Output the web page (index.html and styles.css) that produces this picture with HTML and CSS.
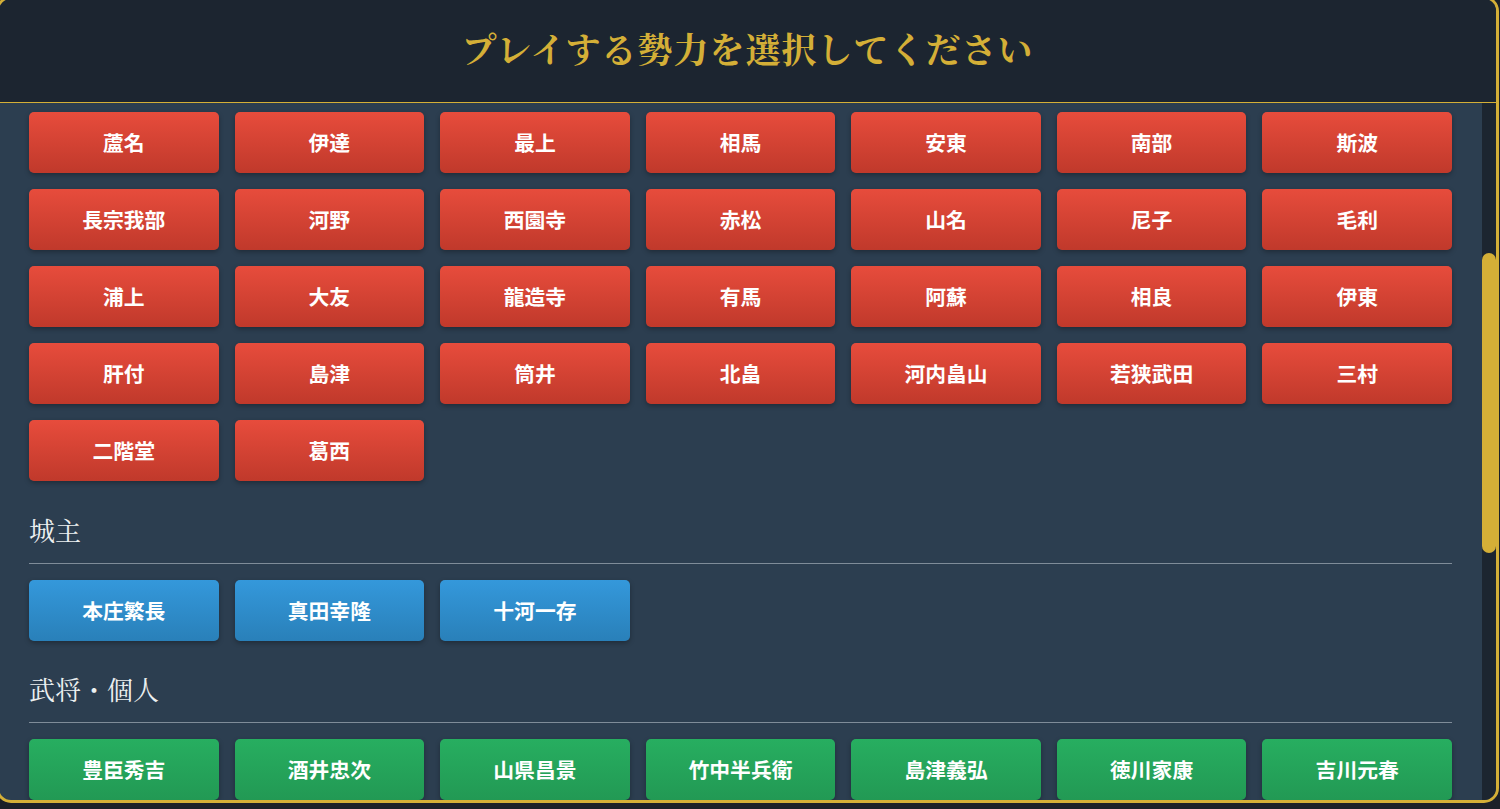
FILE: index.html
```html
<!DOCTYPE html>
<html lang="ja">
<head>
<meta charset="utf-8">
<title>勢力選択</title>
<link rel="stylesheet" href="styles.css">
</head>
<body>
<div class="modal">
  <header class="modal-header">
    <h1 class="modal-title">プレイする勢力を選択してください</h1>
  </header>
  <div class="modal-body">
    <div class="scroll-content">
      <div class="btn-grid">
        <button class="btn btn-red">蘆名</button>
        <button class="btn btn-red">伊達</button>
        <button class="btn btn-red">最上</button>
        <button class="btn btn-red">相馬</button>
        <button class="btn btn-red">安東</button>
        <button class="btn btn-red">南部</button>
        <button class="btn btn-red">斯波</button>
        <button class="btn btn-red">長宗我部</button>
        <button class="btn btn-red">河野</button>
        <button class="btn btn-red">西園寺</button>
        <button class="btn btn-red">赤松</button>
        <button class="btn btn-red">山名</button>
        <button class="btn btn-red">尼子</button>
        <button class="btn btn-red">毛利</button>
        <button class="btn btn-red">浦上</button>
        <button class="btn btn-red">大友</button>
        <button class="btn btn-red">龍造寺</button>
        <button class="btn btn-red">有馬</button>
        <button class="btn btn-red">阿蘇</button>
        <button class="btn btn-red">相良</button>
        <button class="btn btn-red">伊東</button>
        <button class="btn btn-red">肝付</button>
        <button class="btn btn-red">島津</button>
        <button class="btn btn-red">筒井</button>
        <button class="btn btn-red">北畠</button>
        <button class="btn btn-red">河内畠山</button>
        <button class="btn btn-red">若狭武田</button>
        <button class="btn btn-red">三村</button>
        <button class="btn btn-red">二階堂</button>
        <button class="btn btn-red">葛西</button>
      </div>

      <section class="section">
        <h2 class="section-title">城主</h2>
        <div class="btn-grid">
          <button class="btn btn-blue">本庄繁長</button>
          <button class="btn btn-blue">真田幸隆</button>
          <button class="btn btn-blue">十河一存</button>
        </div>
      </section>

      <section class="section">
        <h2 class="section-title">武将・個人</h2>
        <div class="btn-grid">
          <button class="btn btn-green">豊臣秀吉</button>
          <button class="btn btn-green">酒井忠次</button>
          <button class="btn btn-green">山県昌景</button>
          <button class="btn btn-green">竹中半兵衛</button>
          <button class="btn btn-green">島津義弘</button>
          <button class="btn btn-green">徳川家康</button>
          <button class="btn btn-green">吉川元春</button>
        </div>
      </section>
    </div>
    <div class="scrollbar"><div class="scrollbar-thumb"></div></div>
  </div>
</div>
</body>
</html>
```

FILE: styles.css
```css
html, body {
  margin: 0;
  padding: 0;
}
body {
  background: #1b2028;
  width: 1500px;
  height: 809px;
  overflow: hidden;
  font-family: "Noto Sans CJK JP", "Noto Sans", sans-serif;
}
.modal {
  box-sizing: border-box;
  width: 1503px;
  height: 807px;
  margin: -4px 0 0 -4px;
  border: 3px solid #d4af37;
  border-radius: 15px;
  overflow: hidden;
  display: flex;
  flex-direction: column;
  background: #2c3e50;
}
.modal-header {
  flex: 0 0 auto;
  height: 104px;
  box-sizing: border-box;
  background: #1c2530;
  border-bottom: 1px solid #d4af37;
  display: flex;
  align-items: center;
  justify-content: center;
}
.modal-title {
  margin: 0;
  padding-bottom: 5px;
  font-family: "Noto Serif CJK JP", "Noto Serif JP", serif;
  font-weight: 700;
  font-size: 35px;
  letter-spacing: 1px;
  color: #d4af37;
}
.modal-body {
  flex: 1 1 auto;
  min-height: 0;
  display: flex;
}
.scroll-content {
  flex: 1 1 auto;
  min-width: 0;
  overflow: hidden;
  padding: 9px 30px 0 30px;
}
.scrollbar {
  flex: 0 0 14px;
  background: #1c2530;
}
.scrollbar-thumb {
  margin-top: 150px;
  height: 300px;
  border-radius: 7px;
  background: #d4af37;
}
.btn-grid {
  display: grid;
  grid-template-columns: repeat(7, 1fr);
  gap: 16px;
}
.btn {
  height: 61px;
  border: none;
  border-radius: 5px;
  color: #ffffff;
  font-family: "Noto Sans CJK JP", "Noto Sans", sans-serif;
  font-weight: 700;
  font-size: 20.8px;
  box-shadow: 0 2px 5px rgba(0, 0, 0, 0.3);
  cursor: pointer;
  padding: 0 0 2px 0;
}
.btn-red {
  background: linear-gradient(to bottom, #e74c3c, #c0392b);
}
.btn-blue {
  background: linear-gradient(to bottom, #3498db, #2980b9);
}
.btn-green {
  background: linear-gradient(to bottom, #27ae60, #229954);
}
.section {
  margin-top: 31px;
}
.section + .section {
  margin-top: 30px;
}
.section-title {
  margin: 0 0 16px 0;
  padding-bottom: 15px;
  border-bottom: 1px solid #7f8c99;
  font-family: "Noto Serif CJK JP", "Noto Serif JP", serif;
  font-weight: 400;
  font-size: 26px;
  line-height: 36px;
  color: #ecf0f1;
}
```
